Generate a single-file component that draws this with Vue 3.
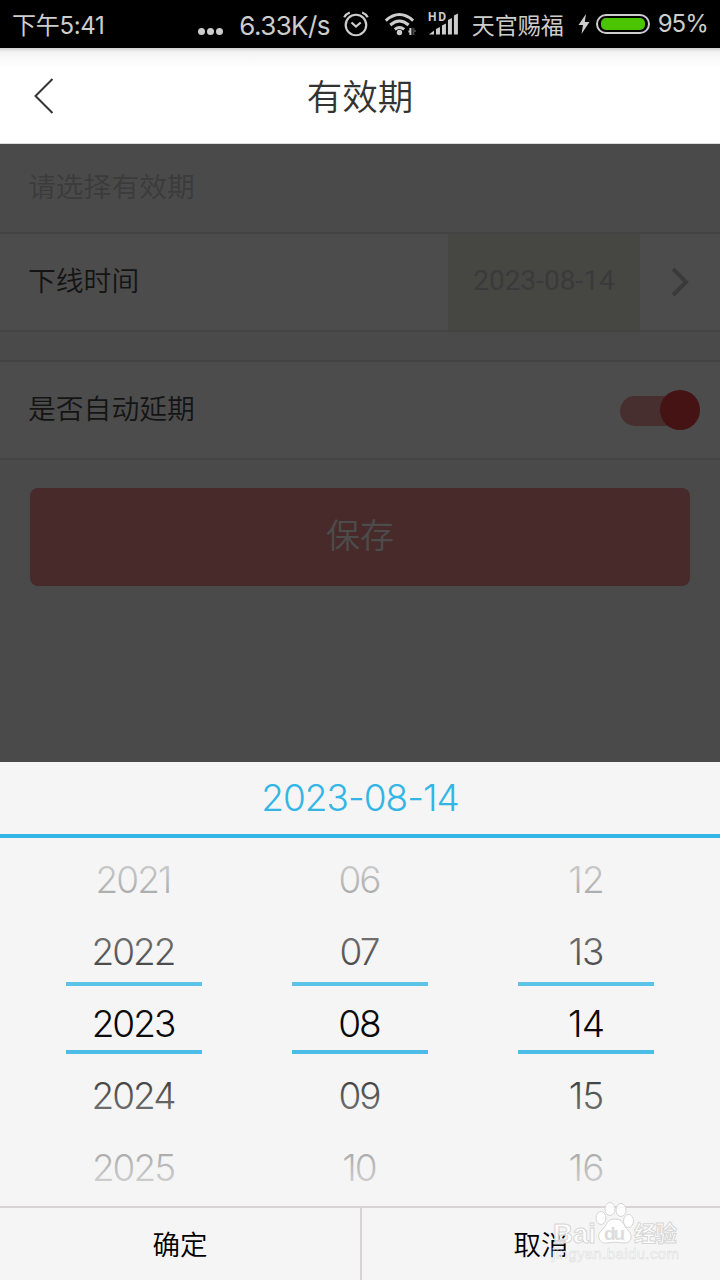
<template>
  <div class="screen">
    <header class="status-bar">
      <span class="clock">下午5:41</span>
      <span class="dots"><i></i><i></i><i></i></span>
      <span class="speed">6.33K/s</span>
      <svg class="alarm" width="28" height="28" viewBox="0 0 28 28">
        <circle cx="14" cy="15" r="10.3" />
        <path d="M9.5 12.5l4.5 4 4.8-4M2.2 7.2Q4 4 7.8 2.5M25.8 7.2Q24 4 20.2 2.5" />
      </svg>
      <svg class="wifi" width="32" height="24" viewBox="0 0 32 24">
        <path d="M1.800 8.500Q15.500 -3.500 29.200 8.500M6.300 13Q15.500 5 24.700 13M10.800 17.500Q15.500 13.500 20.200 17.500" />
        <circle cx="15.500" cy="20.500" r="2.700" />
        <path class="arrows" d="M26.500 16v7M24.500 19.500h2" />
        <path class="arrows faint" d="M29.500 16v7M31 18v2" />
      </svg>
      <svg class="signal" width="31" height="26" viewBox="0 0 31 26">
        <text x="0" y="10.500" textLength="18">HD</text>
        <path d="M1 24.500l5-4v4zM8 19l4-2v7.500H8zM14 15.500l4-2v11h-4zM20 10l4-2v16.500h-4zM26 5.500l4-2v21h-4z" />
      </svg>
      <span class="carrier">天官赐福</span>
      <svg class="bolt" width="12" height="20" viewBox="0 0 12 20">
        <path d="M8 0L0.500 11H5L3.500 20L11.500 8H6.800z" />
      </svg>
      <span class="battery"><i></i></span>
      <span class="percent">95%</span>
    </header>

    <nav class="title-bar">
      <svg class="back" width="20" height="36" viewBox="0 0 20 36">
        <path d="M18.500 1L1.500 18L18.500 35" />
      </svg>
      <h1>有效期</h1>
    </nav>

    <main class="form">
      <p class="hint">请选择有效期</p>
      <div class="row">
        <span class="label">下线时间</span>
        <span class="date-value">{{ selectedDate }}</span>
        <svg class="arrow" width="18" height="30" viewBox="0 0 18 30">
          <path d="M2 2L15 15L2 28" />
        </svg>
      </div>
      <div class="row extend">
        <span class="label">是否自动延期</span>
        <button class="switch" :class="{ on: autoExtend }" @click="autoExtend = !autoExtend"><i></i></button>
      </div>
      <button class="save">保存</button>
    </main>

    <section class="sheet">
      <div class="sheet-title">{{ selectedDate }}</div>
      <div class="picker">
        <div v-for="col in columns" :key="col.name" class="column">
          <span v-for="item in col.items" :key="item" class="item">{{ item }}</span>
          <i class="line top"></i>
          <i class="line bottom"></i>
        </div>
        <div class="fade"></div>
      </div>
      <footer class="actions">
        <button>确定</button>
        <button>取消</button>
      </footer>
    </section>

    <svg class="watermark" width="136" height="64" viewBox="0 0 136 64">
      <g class="logo">
        <text class="bai" x="3" y="42" textLength="43" lengthAdjust="spacingAndGlyphs">Bai</text>
        <ellipse cx="51" cy="17" rx="5" ry="6.500" />
        <ellipse cx="60" cy="8" rx="5" ry="6.500" />
        <ellipse cx="71" cy="9" rx="5" ry="6.500" />
        <ellipse cx="78.500" cy="20" rx="5" ry="6.500" />
        <path d="M65 18C56 18 57 25 52 29C45 35 50 43 57 42C63 41 68 41 73 42C81 43 84 35 78 29C73 25 74 18 65 18Z" />
        <text class="du" x="54" y="39" textLength="21">du</text>
        <text class="jingyan" x="84" y="40" textLength="43">经验</text>
      </g>
      <text class="url" x="2" y="58" textLength="127">jingyan.baidu.com</text>
    </svg>
  </div>
</template>

<script setup>
import { ref, computed } from 'vue'

const autoExtend = ref(true)

const columns = ref([
  { name: 'year', items: ['2021', '2022', '2023', '2024', '2025'] },
  { name: 'month', items: ['06', '07', '08', '09', '10'] },
  { name: 'day', items: ['12', '13', '14', '15', '16'] }
])

// the middle item of each wheel is the selected one
const selectedDate = computed(() => columns.value.map(col => col.items[2]).join('-'))
</script>

<style>
body {
  margin: 0;
}
</style>

<style scoped>
.screen {
  position: relative;
  display: flex;
  flex-direction: column;
  width: 720px;
  height: 1280px;
  overflow: hidden;
  background: #4a4a4a;
  font-family: Roboto, "Noto Sans CJK SC", sans-serif;
  font-weight: 350;
}

button {
  border: none;
  padding: 0;
  background: none;
  font: inherit;
}

.status-bar {
  display: flex;
  align-items: center;
  height: 48px;
  box-sizing: border-box;
  padding: 0 12px;
  background: #000;
  color: #cdcdcd;
  font-size: 25px;
  font-weight: 400;
  line-height: 48px;
  white-space: nowrap;
}

.clock {
  width: 187px;
  font-family: Inter, "Noto Sans CJK SC", sans-serif;
  font-size: 24px;
  letter-spacing: -0.3px;
  padding-top: 3px;
}

.dots {
  display: flex;
  gap: 2px;
  width: 41px;
  padding-top: 15px;
}

.dots i {
  width: 7px;
  height: 7px;
  border-radius: 50%;
  background: #cdcdcd;
}

.speed {
  width: 103px;
  font-family: Inter, sans-serif;
  font-size: 26px;
  letter-spacing: -0.6px;
  padding-top: 3px;
}

.alarm,
.wifi {
  fill: none;
  stroke: #cdcdcd;
  stroke-width: 2.2;
}

.wifi {
  margin-left: 14px;
  stroke-width: 3;
}

.wifi circle {
  fill: #cdcdcd;
  stroke: none;
}

.wifi .arrows {
  stroke-width: 2;
}

.wifi .faint {
  stroke: #444;
}

.signal {
  margin: -2px 0 0 12px;
  fill: #cdcdcd;
}

.signal text {
  font-size: 12px;
  font-weight: 700;
}

.carrier {
  width: 92px;
  margin-left: 13px;
  font-size: 23px;
  padding-top: 5px;
}

.bolt {
  margin-left: 14px;
  fill: #cdcdcd;
}

.battery {
  display: flex;
  width: 54px;
  height: 20px;
  box-sizing: border-box;
  margin-left: 6px;
  padding: 2px 3px;
  border: 2px solid #cdcdcd;
  border-radius: 10px;
}

.battery i {
  flex: 1;
  border-radius: 5px;
  background: #4bc400;
}

.percent {
  margin-left: 8px;
  font-family: Inter, sans-serif;
  font-size: 24px;
  letter-spacing: -0.9px;
}

.title-bar {
  display: flex;
  align-items: center;
  height: 96px;
  box-sizing: border-box;
  padding: 0 34px;
  border-bottom: 1px solid #ddd;
  background: linear-gradient(#d0d0d0, #f4f4f4 4px, #fff 20px);
}

.back {
  fill: none;
  stroke: #333;
  stroke-width: 2;
}

h1 {
  flex: 1;
  margin: 0 20px 0 0;
  padding-top: 6px;
  color: #333;
  font-size: 35.500px;
  font-weight: 350;
  line-height: 89px;
  text-align: center;
}

.form {
  height: 618px;
  color: #141414;
  font-size: 27.800px;
}

.hint {
  height: 88px;
  margin: 0;
  padding-left: 28px;
  color: #3b3b3b;
  line-height: 87px;
}

.row {
  display: flex;
  align-items: center;
  height: 96px;
  border-top: 2px solid #434343;
  border-bottom: 2px solid #434343;
  background: #4c4c4c;
}

.label {
  flex: 1;
  padding: 0 0 6px 28px;
}

.date-value {
  width: 192px;
  height: 96px;
  background: #464643;
  color: #3a3a3a;
  font-size: 28px;
  font-weight: 400;
  line-height: 94px;
  text-align: center;
}

.arrow {
  margin: 0 31px;
  fill: none;
  stroke: #3a3a3a;
  stroke-width: 4;
}

.extend {
  margin-top: 28px;
}

.switch {
  width: 80px;
  height: 40px;
  margin-right: 20px;
  display: flex;
  align-items: center;
}

.switch::before {
  content: "";
  width: 70px;
  height: 30px;
  margin-top: 1px;
  border-radius: 15px;
  background: #3d3d3d;
}

.switch i {
  width: 40px;
  height: 40px;
  margin-left: -70px;
  border-radius: 50%;
  background: #303030;
}

.switch.on::before {
  background: #482f2f;
}

.switch.on i {
  margin-left: -30px;
  background: #451313;
}

.save {
  display: block;
  width: 660px;
  height: 98px;
  margin: 28px auto 0;
  padding-bottom: 8px;
  border-radius: 8px;
  background: #482a2a;
  color: #4c4c4c;
  font-size: 34px;
}

.sheet {
  flex: 1;
  display: flex;
  flex-direction: column;
  background: #f5f5f5;
}

.sheet-title {
  height: 72px;
  border-bottom: 4px solid #33b5e5;
  color: #33b5e5;
  font-family: Inter, sans-serif;
  font-size: 37px;
  font-weight: 300;
  letter-spacing: -1px;
  line-height: 72px;
  text-align: center;
}

.picker {
  position: relative;
  display: flex;
  justify-content: space-between;
  height: 368px;
  box-sizing: border-box;
  padding: 6px 66px 0;
}

.column {
  position: relative;
  display: flex;
  flex-direction: column;
  width: 136px;
}

.item {
  height: 72px;
  padding-right: 2px;
  color: #000;
  font-family: Inter, sans-serif;
  font-size: 37px;
  font-weight: 300;
  letter-spacing: -2px;
  line-height: 72px;
  text-align: center;
}

.column:nth-child(3) .item {
  padding: 0;
  letter-spacing: -1px;
}

.line {
  position: absolute;
  left: 0;
  right: 0;
  height: 4px;
  background: #33b5e5;
}

.line.top {
  top: 138px;
}

.line.bottom {
  top: 206px;
}

/* wheel edges dissolve into the sheet background */
.fade {
  position: absolute;
  inset: 0;
  background: linear-gradient(
    #f5f5f5,
    rgba(245, 245, 245, 0.82) 28px,
    rgba(245, 245, 245, 0.7) 56px,
    rgba(245, 245, 245, 0.45) 100px,
    rgba(245, 245, 245, 0.3) 128px,
    rgba(245, 245, 245, 0.2) 148px,
    rgba(245, 245, 245, 0) 186px,
    rgba(245, 245, 245, 0.12) 214px,
    rgba(245, 245, 245, 0.28) 244px,
    rgba(245, 245, 245, 0.45) 272px,
    rgba(245, 245, 245, 0.7) 316px,
    rgba(245, 245, 245, 0.84) 344px,
    #f5f5f5
  );
}

.actions {
  display: flex;
  flex: 1;
  border-top: 2px solid #d8d3d5;
}

.actions button {
  width: 360px;
  padding-bottom: 2px;
  color: #000;
  font-size: 27.500px;
}

.actions button + button {
  border-left: 2px solid #d8d3d5;
}

.watermark {
  position: absolute;
  left: 550px;
  top: 1201px;
  font-family: "Liberation Sans", "Noto Sans CJK SC", sans-serif;
}

.logo {
  fill: rgba(255, 255, 255, 0.85);
  stroke: #d6d6d6;
  stroke-width: 1;
  font-weight: 700;
}

.bai {
  font-size: 28px;
}

.du {
  fill: #dcdcdc;
  stroke: none;
  font-size: 19px;
}

.jingyan {
  font-size: 22px;
}

.url {
  fill: #fff;
  stroke: #dedede;
  stroke-width: 0.6;
  font-size: 15px;
  font-weight: 400;
}
</style>
